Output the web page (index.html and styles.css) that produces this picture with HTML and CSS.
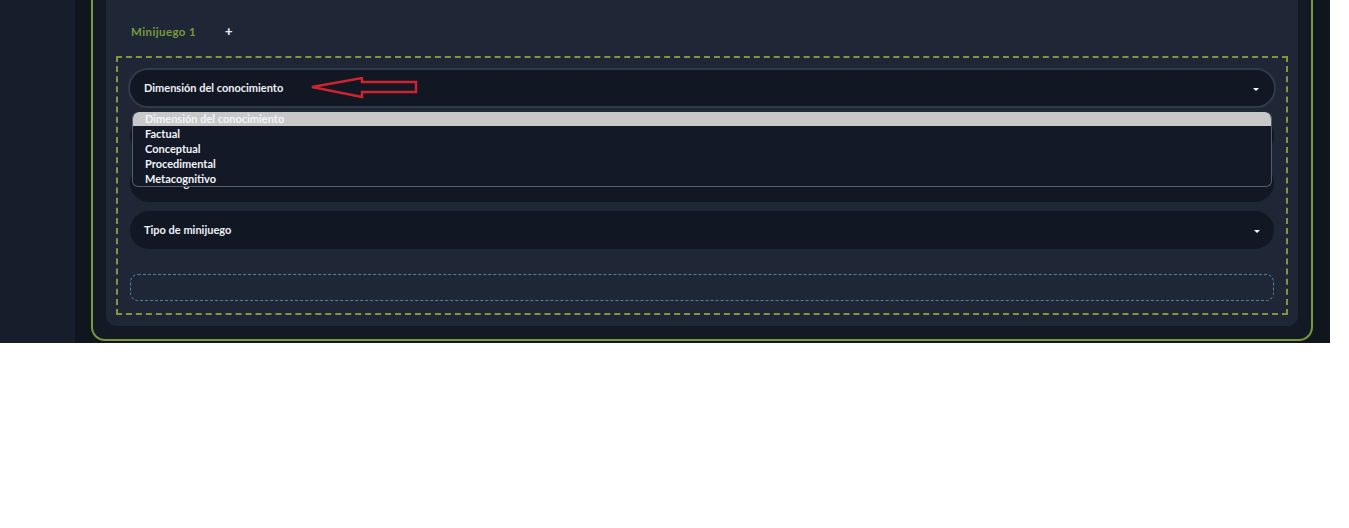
FILE: index.html
```html
<!DOCTYPE html>
<html lang="es">
<head>
<meta charset="utf-8">
<title>Minijuego</title>
<link rel="stylesheet" href="styles.css">
</head>
<body>
<div class="app">
  <aside class="sidebar"></aside>
  <div class="gutter"></div>
  <section class="frame">
    <div class="panel">
      <div class="tabs">
        <span class="tab active">Minijuego 1</span>
        <span class="tab add">+</span>
      </div>
      <div class="game-box">
        <div class="field-wrap">
          <div class="select focused">
            <span class="label">Dimensión del conocimiento</span>
            <span class="caret"></span>
          </div>
          <svg class="annot-arrow" width="110" height="24" viewBox="0 0 110 24">
            <polygon points="2,10 52,1 52,5 106,5 106,15 52,15 52,20" fill="none" stroke="#cf2430" stroke-width="2.4" stroke-linejoin="miter"/>
          </svg>
          <ul class="dropdown">
            <li class="opt selected">Dimensión del conocimiento</li>
            <li class="opt">Factual</li>
            <li class="opt">Conceptual</li>
            <li class="opt">Procedimental</li>
            <li class="opt">Metacognitivo</li>
          </ul>
        </div>
        <div class="select">
          <span class="label">Proceso cognitivo</span>
          <span class="caret"></span>
        </div>
        <div class="select">
          <span class="label">Nivel cognitivo</span>
          <span class="caret"></span>
        </div>
        <div class="select">
          <span class="label">Tipo de minijuego</span>
          <span class="caret"></span>
        </div>
        <div class="drop-zone"></div>
      </div>
    </div>
  </section>
  <div class="right-gutter"></div>
</div>
</body>
</html>
```
FILE: styles.css
```css
html, body {
  margin: 0;
  padding: 0;
  background: #ffffff;
}

body {
  font-family: "Lato", "Noto Sans", sans-serif;
}

.app {
  display: flex;
  width: 1330px;
  height: 343px;
  background: #10151e;
}

.sidebar {
  width: 75px;
  background: #171d2b;
  flex: none;
}

.gutter {
  width: 16px;
  flex: none;
}

.frame {
  width: 1222px;
  height: 341px;
  flex: none;
  border: 2px solid #789a3c;
  border-top: none;
  border-radius: 0 0 14px 14px;
  background: #141a25;
  padding: 0 13px 13px 13px;
  box-sizing: border-box;
}

.right-gutter {
  flex: 1;
}

.panel {
  height: 326px;
  background: #1f2736;
  border-radius: 0 0 10px 10px;
  padding: 0 10px;
  box-sizing: border-box;
  display: flex;
  flex-direction: column;
}

.tabs {
  display: flex;
  align-items: center;
  height: 14px;
  margin-top: 24px;
  padding-left: 15px;
  gap: 29px;
  font-size: 11.5px;
  font-weight: 700;
}

.tab.active {
  color: #789a3c;
  letter-spacing: 0.4px;
}

.tab.add {
  color: #e8ecf2;
  font-size: 13px;
  font-weight: 900;
}

.game-box {
  margin-top: 18px;
  border: 2px dashed #789a3c;
  padding: 10px 12px 12px;
  display: flex;
  flex-direction: column;
  gap: 9px;
  box-sizing: border-box;
  height: 259px;
}

.field-wrap {
  position: relative;
  margin: 0 -2px;
}

.select {
  height: 38px;
  border-radius: 19px;
  background: #111723;
  display: flex;
  align-items: center;
  justify-content: space-between;
  padding: 0 14px 2px;
  box-sizing: border-box;
  color: #eef1f6;
  font-size: 11px;
  font-weight: 700;
}

.select.focused {
  height: 40px;
  border: 2px solid #313a4b;
  border-radius: 20px;
  padding: 0 15px 2px 14px;
}

.caret {
  width: 0;
  height: 0;
  border-left: 3px solid transparent;
  border-right: 3px solid transparent;
  border-top: 3px solid #ffffff;
  margin-top: 4px;
}

.annot-arrow {
  position: absolute;
  left: 182px;
  top: 9px;
}

.dropdown {
  position: absolute;
  left: 4px;
  right: 4px;
  top: 44px;
  height: 75px;
  margin: 0;
  padding: 0;
  list-style: none;
  background: #131927;
  border: 1px solid #555c6b;
  border-top: none;
  border-radius: 6px;
  box-sizing: border-box;
  overflow: hidden;
  z-index: 2;
}

.opt {
  height: 15px;
  line-height: 15px;
  padding-left: 12px;
  color: #f2f4f8;
  font-size: 11px;
  font-weight: 700;
}

.opt.selected {
  height: 14px;
  line-height: 13px;
  background: #c8c8c8;
  border-radius: 6px 6px 0 0;
}

.drop-zone {
  margin-top: 16px;
  height: 27px;
  border: 1px dashed #4f7fab;
  border-radius: 8px;
  box-sizing: border-box;
}
```
